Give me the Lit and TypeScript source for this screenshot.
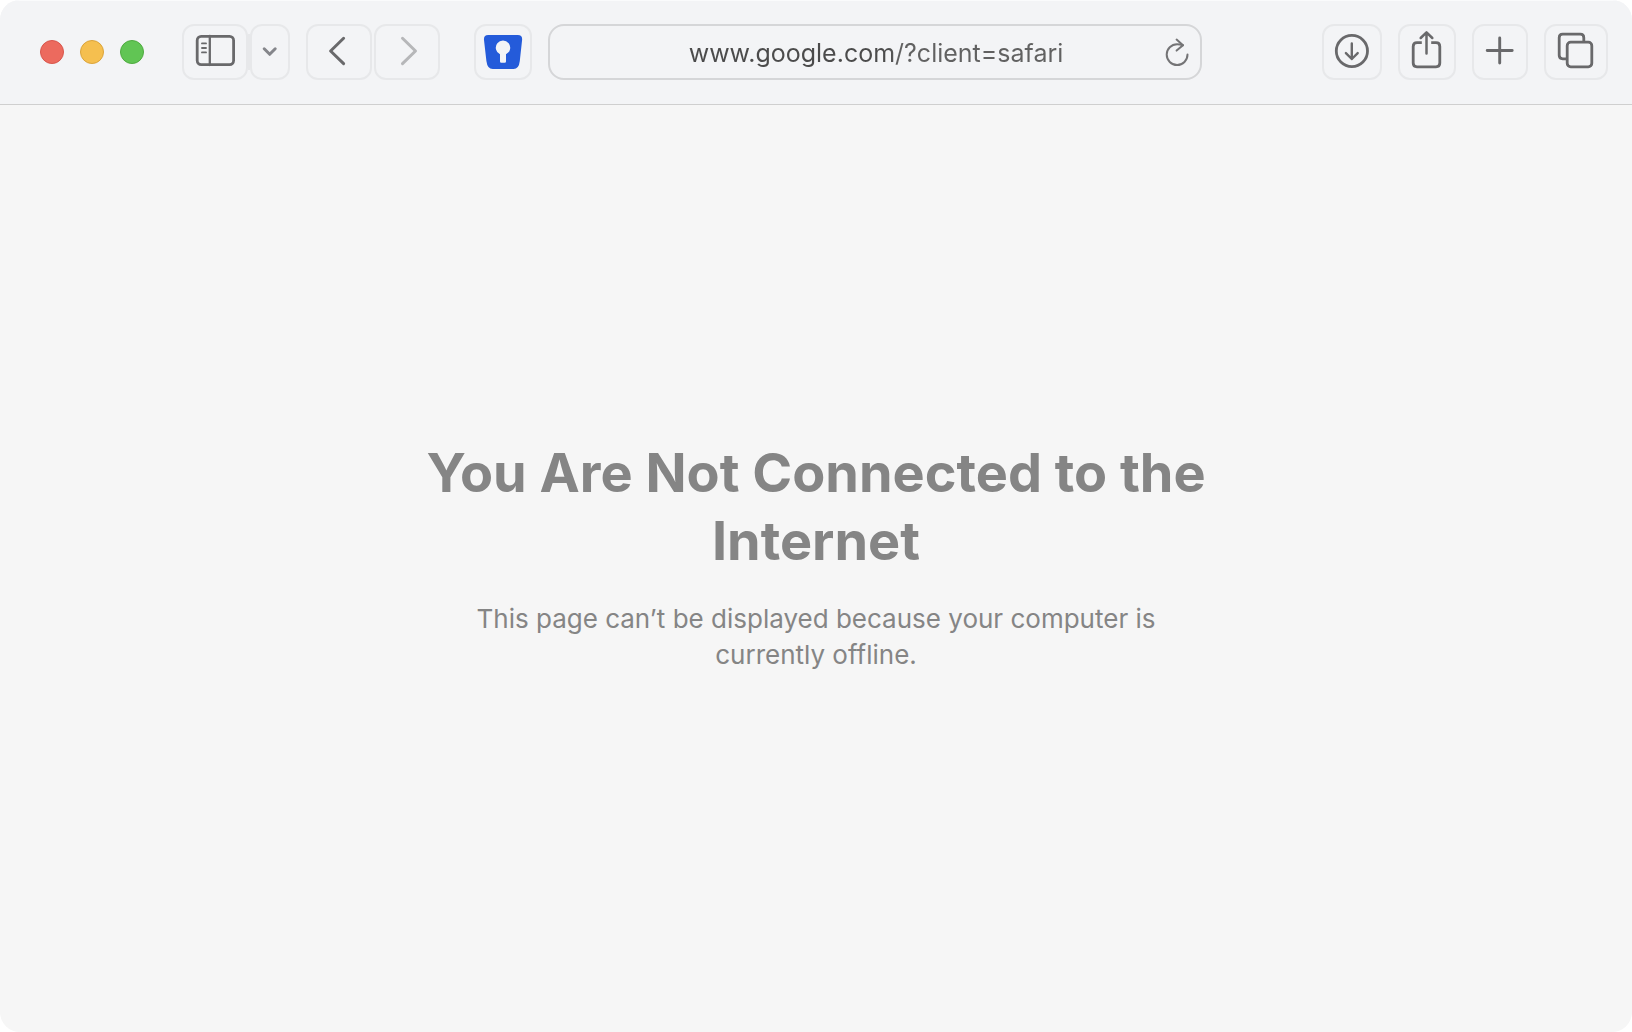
import { LitElement, html, css, svg, TemplateResult, SVGTemplateResult } from "lit";
import { customElement, property, state } from "lit/decorators.js";

type IconDef = { width: number; art: SVGTemplateResult };

// Each glyph is drawn in the coordinate space of its 56px-high button.
const icons: Record<string, IconDef> = {
  sidebar: {
    width: 66,
    art: svg`<rect x="15.2" y="12.4" width="36.4" height="28.2" rx="4"/>
      <path d="M27.8 12v29" stroke-width="2.3"/>
      <path d="M20 19.4h4M20 24h4M20 28.4h4" stroke-width="1.9"/>`,
  },
  menu: {
    width: 40,
    art: svg`<path d="M14.2 24.8l5.5 5.5 5.5-5.5" stroke-width="3"/>`,
  },
  back: {
    width: 66,
    art: svg`<path d="M37.6 14.3L24.6 27l13 12.6" stroke-width="3"/>`,
  },
  forward: {
    width: 66,
    art: svg`<path d="M28.5 14.3L41.5 27l-13 12.6" stroke-width="3"/>`,
  },
  vault: {
    width: 58,
    art: svg`<path fill="#245bda" fill-rule="evenodd" stroke="none"
      d="M14.2 11H43.8Q48.6 11 48.1 16L45.8 37Q44.9 45 39.5 45H18.700Q13.400 45 12.400 37L10 16Q9.500 11 14.200 11Z
         M26 30.300V37.500Q26 38.800 27.300 38.800H30.700Q32 38.800 32 37.500V30.300A7.200 7.200 0 1 0 26 30.300Z"/>`,
  },
  download: {
    width: 60,
    art: svg`<circle cx="29.900" cy="27" r="15.600"/>
      <path d="M29.800 19.500v15.500M23.900 29.100l5.900 5.900 5.900-5.900" stroke-width="2.400"/>`,
  },
  share: {
    width: 58,
    art: svg`<path d="M23.800 18.600H19Q15.200 18.600 15.200 22.400V39Q15.200 42.800 19 42.800H38Q41.800 42.800 41.800 39V22.400Q41.800 18.600 38 18.600H33.200" stroke-linecap="butt"/>
      <path d="M28.500 8.500V29.600M22.700 14l5.800-5.700 5.800 5.700" stroke-width="2.500"/>`,
  },
  plus: {
    width: 56,
    art: svg`<path d="M15.200 26.500h25M27.700 14v25" stroke-width="2.900"/>`,
  },
  tabs: {
    width: 64,
    art: svg`<rect x="23.200" y="18.200" width="24.600" height="24.600" rx="3.500"/>
      <path d="M22 34.800H18.700Q15.200 34.800 15.200 31.300V13.700Q15.200 10.200 18.700 10.200H36.300Q39.800 10.200 39.800 13.700V17"/>`,
  },
};

@customElement("toolbar-button")
export class ToolbarButton extends LitElement {
  @property() icon = "";
  @property() label = "";
  @property({ type: Boolean }) inactive = false;

  static styles = css`
    :host {
      display: block;
      flex: none;
    }
    .button {
      display: block;
      box-sizing: border-box;
      height: 56px;
      padding: 0;
      border: 2px solid #e7e8ea;
      border-radius: 12px;
      background: transparent;
      color: #69696b;
    }
    .glyph {
      display: block;
      fill: none;
      stroke: currentColor;
      stroke-width: 2.8;
      stroke-linecap: round;
      stroke-linejoin: round;
    }
    .menu {
      color: #85868b;
    }
    .inactive {
      color: #b6b7b9;
    }
  `;

  render(): TemplateResult {
    const { width, art } = icons[this.icon];
    const inner = width - 4;
    return html`<button
      class="button ${this.icon} ${this.inactive ? "inactive" : ""}"
      type="button"
      aria-label=${this.label}
      ?disabled=${this.inactive}
    >
      <svg class="glyph" width=${inner} height="52" viewBox="2 2 ${inner} 52" aria-hidden="true">${art}</svg>
    </button>`;
  }
}

@customElement("app-root")
export class AppRoot extends LitElement {
  @state() private address = "www.google.com/?client=safari";

  static styles = css`
    :host {
      display: block;
      font-family: Inter, "Liberation Sans", sans-serif;
    }
    .window {
      display: flex;
      flex-direction: column;
      min-height: 100vh;
      border-radius: 20px;
      overflow: hidden;
      background: #f6f6f6;
    }
    .toolbar {
      display: flex;
      align-items: center;
      gap: 16px;
      padding: 24px 24px 24px 40px;
      border-bottom: 1px solid #cfcfcf;
      background: #f3f4f6;
      box-shadow: inset 0 1px #fafbfc;
    }
    .lights {
      display: flex;
      gap: 16px;
      margin-right: 22px;
    }
    .light {
      width: 24px;
      height: 24px;
      padding: 0;
      border: 1px solid;
      border-radius: 50%;
    }
    .close {
      background: #ec6a5e;
      border-color: #d8564c;
    }
    .minimize {
      background: #f5bf4f;
      border-color: #dba43b;
    }
    .zoom {
      background: #61c554;
      border-color: #4fab40;
    }
    .group {
      display: flex;
      align-items: center;
      gap: 2px;
    }
    .joined {
      gap: 0;
    }
    .divider {
      width: 2px;
      height: 36px;
      background: #e7e8ea;
    }
    .extension {
      margin-left: 18px;
    }
    .field {
      display: flex;
      align-items: center;
      flex: 1;
      min-width: 0;
      box-sizing: border-box;
      height: 56px;
      margin-right: 104px;
      padding: 0 10px 0 48px;
      border: 2px solid #d5d6d8;
      border-radius: 16px;
    }
    .address {
      flex: 1;
      min-width: 0;
      height: 36px;
      padding: 2px 0 0;
      border: 0;
      outline: 0;
      font: 400 25px/34px Inter, "Liberation Sans", sans-serif;
      text-align: center;
      color: #555555;
      background: linear-gradient(90deg, #4b4b4b 52%, #616161 54%);
      -webkit-background-clip: text;
      background-clip: text;
      -webkit-text-fill-color: transparent;
    }
    .reload {
      flex: none;
      width: 36px;
      height: 36px;
      padding: 0;
      border: 0;
      background: transparent;
      color: #747476;
    }
    .reload-glyph {
      display: block;
      fill: none;
      stroke: currentColor;
      stroke-width: 2;
      stroke-linecap: round;
      stroke-linejoin: round;
    }
    .page {
      display: flex;
      flex: 1;
      flex-direction: column;
      align-items: center;
      justify-content: center;
      gap: 26px;
      padding: 0 24px 26px;
      text-align: center;
      color: #858585;
    }
    .title {
      max-width: 800px;
      margin: 0;
      font-size: 54px;
      font-weight: 700;
      line-height: 68px;
    }
    .message {
      max-width: 720px;
      margin: 0;
      font-size: 26px;
      line-height: 36px;
    }
  `;

  private onAddress(event: Event): void {
    this.address = (event.target as HTMLInputElement).value;
  }

  render(): TemplateResult {
    return html`
      <div class="window">
        <header class="toolbar">
          <div class="lights">
            <button class="light close" type="button" aria-label="Close"></button>
            <button class="light minimize" type="button" aria-label="Minimize"></button>
            <button class="light zoom" type="button" aria-label="Zoom"></button>
          </div>
          <div class="group joined">
            <toolbar-button icon="sidebar" label="Show sidebar"></toolbar-button>
            <span class="divider"></span>
            <toolbar-button icon="menu" label="Tab groups"></toolbar-button>
          </div>
          <nav class="group" aria-label="History">
            <toolbar-button icon="back" label="Back"></toolbar-button>
            <toolbar-button icon="forward" label="Forward" inactive></toolbar-button>
          </nav>
          <toolbar-button class="extension" icon="vault" label="Password manager"></toolbar-button>
          <div class="field">
            <input
              class="address"
              type="text"
              aria-label="Address"
              spellcheck="false"
              .value=${this.address}
              @input=${this.onAddress}
            />
            <button class="reload" type="button" aria-label="Reload">
              <svg class="reload-glyph" width="36" height="36" viewBox="0 0 36 36" aria-hidden="true">
                <path d="M33.500 20.600A10.400 10.400 0 1 1 23.100 10.200Q26 10.200 29 11.200" />
                <path d="M22.600 5.600L29 11.200L22.600 16.600" />
              </svg>
            </button>
          </div>
          <toolbar-button icon="download" label="Downloads"></toolbar-button>
          <toolbar-button icon="share" label="Share"></toolbar-button>
          <toolbar-button icon="plus" label="New tab"></toolbar-button>
          <toolbar-button icon="tabs" label="Tab overview"></toolbar-button>
        </header>
        <main class="page">
          <h1 class="title">You Are Not Connected to the Internet</h1>
          <p class="message">This page can’t be displayed because your computer is currently offline.</p>
        </main>
      </div>
    `;
  }
}
